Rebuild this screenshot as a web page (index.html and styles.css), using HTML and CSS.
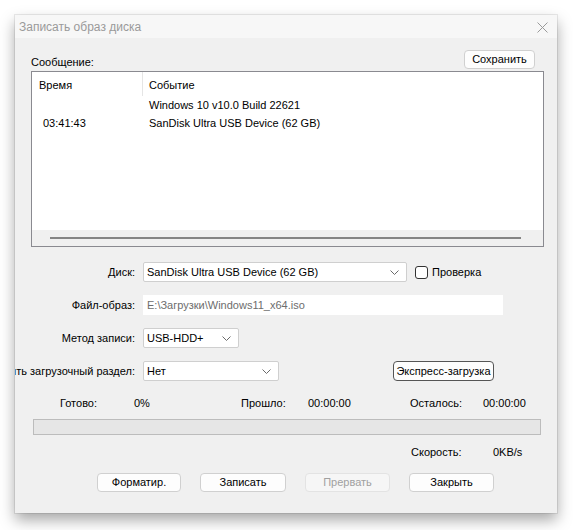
FILE: index.html
```html
<!DOCTYPE html>
<html lang="ru">
<head>
<meta charset="utf-8">
<title>Записать образ диска</title>
<link rel="stylesheet" href="styles.css">
</head>
<body>
<div class="window">
  <div class="titlebar">
    <span class="title">Записать образ диска</span>
    <svg class="close" width="11" height="11" viewBox="0 0 11 11"><path d="M0.5 0.5 L10.5 10.5 M10.5 0.5 L0.5 10.5" stroke="#9a9a9a" stroke-width="1" fill="none"/></svg>
  </div>

  <div class="msg-head">
    <span class="msg-label">Сообщение:</span>
    <button class="btn btn-save">Сохранить</button>
  </div>

  <div class="listbox">
    <div class="list-header">
      <div class="col-time">Время</div>
      <div class="col-event">Событие</div>
    </div>
    <div class="list-row">
      <div class="cell-time"></div>
      <div class="cell-event">Windows 10 v10.0 Build 22621</div>
    </div>
    <div class="list-row">
      <div class="cell-time">03:41:43</div>
      <div class="cell-event">SanDisk Ultra USB Device (62 GB)</div>
    </div>
    <div class="list-fill"></div>
    <div class="hscroll"><div class="hscroll-thumb"></div></div>
  </div>

  <div class="form">
    <div class="form-row">
      <div class="label">Диск:</div>
      <div class="combo combo-disk"><span>SanDisk Ultra USB Device (62 GB)</span><svg width="9" height="5" viewBox="0 0 9 5"><path d="M0.5 0.5 L4.5 4.5 L8.5 0.5" stroke="#6a6a6a" fill="none"/></svg></div>
      <label class="check"><span class="box"></span>Проверка</label>
    </div>
    <div class="form-row">
      <div class="label">Файл-образ:</div>
      <div class="field">E:\Загрузки\Windows11_x64.iso</div>
    </div>
    <div class="form-row">
      <div class="label">Метод записи:</div>
      <div class="combo combo-method"><span>USB-HDD+</span><svg width="9" height="5" viewBox="0 0 9 5"><path d="M0.5 0.5 L4.5 4.5 L8.5 0.5" stroke="#6a6a6a" fill="none"/></svg></div>
    </div>
    <div class="form-row">
      <div class="label">Скрыть загрузочный раздел:</div>
      <div class="combo combo-hide"><span>Нет</span><svg width="9" height="5" viewBox="0 0 9 5"><path d="M0.5 0.5 L4.5 4.5 L8.5 0.5" stroke="#6a6a6a" fill="none"/></svg></div>
      <button class="btn btn-express">Экспресс-загрузка</button>
    </div>
  </div>

  <div class="progress-info">
    <span></span>
    <span>Готово:</span>
    <span>0%</span>
    <span>Прошло:</span>
    <span>00:00:00</span>
    <span>Осталось:</span>
    <span>00:00:00</span>
  </div>
  <div class="progress-bar"></div>
  <div class="speed">
    <span>Скорость:</span>
    <span>0KB/s</span>
  </div>

  <div class="buttons">
    <button class="btn btn-format">Форматир.</button>
    <button class="btn btn-write">Записать</button>
    <button class="btn btn-stop" disabled>Прервать</button>
    <button class="btn btn-close">Закрыть</button>
  </div>
</div>
</body>
</html>
```

FILE: styles.css
```css
html, body {
  margin: 0;
  background: #ffffff;
}

body {
  padding: 15px 0 17px 15px;
  font-family: "Liberation Sans", Arial, sans-serif;
  font-size: 11px;
  color: #000;
}

.window {
  width: 542px;
  height: 498px;
  background: #f0f0f0;
  box-shadow: 0 0 0 1px rgba(0, 0, 0, 0.08), 0 7px 14px rgba(0, 0, 0, 0.35);
  overflow: hidden;
  display: flex;
  flex-direction: column;
}

.titlebar {
  height: 23px;
  background: #f7f7f7;
  display: flex;
  align-items: center;
  justify-content: space-between;
  padding: 0 9px 0 4px;
  flex: none;
}

.title {
  font-size: 12px;
  color: #9a9a9a;
  padding-top: 1px;
}

.close {
  display: block;
  margin-top: 1px;
}

.msg-head {
  margin-top: 12px;
  height: 19px;
  padding: 0 22px 0 16px;
  display: flex;
  justify-content: space-between;
  align-items: flex-end;
  flex: none;
}

.msg-label {
  line-height: 14px;
}

.btn {
  font-family: "Liberation Sans", Arial, sans-serif;
  font-size: 11px;
  color: #000;
  background: #fdfdfd;
  border: 1px solid #d0d0d0;
  border-radius: 4px;
  padding: 0;
  margin: 0;
  height: 19px;
  line-height: 17px;
  text-align: center;
}

.btn-save {
  width: 71px;
}

.listbox {
  margin: 2px 13px 0 16px;
  height: 176px;
  box-sizing: border-box;
  border: 1px solid #8a8a90;
  background: #fff;
  display: flex;
  flex-direction: column;
  flex: none;
}

.list-header {
  height: 24px;
  display: flex;
  align-items: stretch;
  flex: none;
}

.col-time {
  width: 103px;
  padding-left: 7px;
  border-right: 1px solid #e5e5e5;
  display: flex;
  align-items: center;
  padding-top: 2px;
}

.col-event {
  padding-left: 6px;
  display: flex;
  align-items: center;
  padding-top: 2px;
}

.list-row {
  height: 18px;
  display: flex;
  align-items: center;
  flex: none;
}

.cell-time {
  width: 100px;
  padding-left: 11px;
}

.cell-event {
  padding-left: 6px;
}

.list-fill {
  flex: 1;
}

.hscroll {
  height: 16px;
  background: #f0f0f0;
  display: flex;
  align-items: center;
  padding: 0 22px 0 18px;
  flex: none;
}

.hscroll-thumb {
  flex: 1;
  height: 2px;
  background: #858585;
  margin-top: -1px;
}

.form {
  margin-top: 15px;
  display: flex;
  flex-direction: column;
  gap: 13px;
  flex: none;
}

.form-row {
  display: flex;
  align-items: center;
  height: 20px;
}

.label {
  width: 120px;
  flex: none;
  display: flex;
  justify-content: flex-end;
  white-space: nowrap;
  margin-right: 8px;
}

.combo {
  height: 20px;
  box-sizing: border-box;
  border: 1px solid #cfcfcf;
  border-radius: 2px;
  background: #fff;
  display: flex;
  align-items: center;
  justify-content: space-between;
  padding: 0 7px 0 3px;
  flex: none;
}

.combo span {
  white-space: nowrap;
}

.combo svg {
  display: block;
}

.combo-disk {
  width: 264px;
}

.combo-method {
  width: 96px;
}

.combo-hide {
  width: 136px;
}

.check {
  display: flex;
  align-items: center;
  margin-left: 8px;
}

.box {
  width: 11px;
  height: 11px;
  border: 1px solid #333;
  border-radius: 3px;
  background: #fff;
  margin-right: 4px;
}

.field {
  width: 360px;
  height: 20px;
  box-sizing: border-box;
  background: #fff;
  color: #6d6d6d;
  padding-left: 4px;
  display: flex;
  align-items: center;
}

.btn-express {
  width: 101px;
  height: 20px;
  margin-left: 114px;
  border-color: #555;
}

.progress-info {
  margin-top: 15px;
  display: grid;
  grid-template-columns: 45px 74px 107px 67px 102px 73px auto;
  line-height: 14px;
  flex: none;
}

.progress-bar {
  margin: 9px 16px 0 18px;
  height: 16px;
  box-sizing: border-box;
  border: 1px solid #bcbcbc;
  background: #e6e6e6;
  flex: none;
}

.speed {
  margin-top: 10px;
  padding-left: 396px;
  display: grid;
  grid-template-columns: 82px auto;
  line-height: 14px;
  flex: none;
}

.buttons {
  margin-top: 14px;
  padding-left: 82px;
  display: flex;
  gap: 19px;
  flex: none;
}

.btn-format {
  width: 84px;
}

.btn-write {
  width: 86px;
}

.btn-stop {
  width: 85px;
  color: #a0a0a0;
  background: #f6f6f6;
  border-color: #e3e3e3;
}

.btn-close {
  width: 85px;
}
```
